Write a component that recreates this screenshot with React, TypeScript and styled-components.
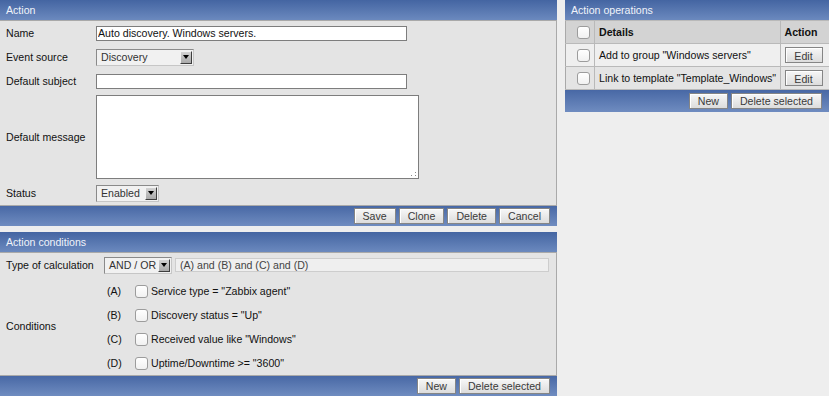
import React from "react";
import styled, { createGlobalStyle } from "styled-components";

const GlobalStyle = createGlobalStyle`
  html, body { margin: 0; padding: 0; background: #eeeeee; }
  body {
    font-family: "Liberation Sans", Arial, Helvetica, sans-serif;
    font-size: 10.6px;
    color: #111;
  }
  * { box-sizing: border-box; }
`;

const Page = styled.div`
  display: flex;
  align-items: flex-start;
  gap: 8px;
  width: 829px;
  height: 396px;
  overflow: hidden;
`;

const LeftCol = styled.div`
  display: flex;
  flex-direction: column;
  gap: 6px;
  width: 557px;
`;

const Panel = styled.section<{ $width: number }>`
  display: flex;
  flex-direction: column;
  width: ${(p) => p.$width}px;
`;

const PanelHeader = styled.div`
  height: 20px;
  line-height: 20px;
  padding-left: 6px;
  color: #f0f3fa;
  background: linear-gradient(#4465a2, #6b89be);
`;

const PanelBody = styled.div`
  background: #e4e4e4;
  border: 1px solid #a9a9a9;
  border-left: none;
`;

const PanelFooter = styled.div<{ $h?: number }>`
  height: ${(p) => p.$h ?? 20}px;
  display: flex;
  justify-content: flex-end;
  align-items: center;
  gap: 3px;
  padding-right: 7px;
  background: linear-gradient(#4868a5, #6f8cc0);
`;

const Button = styled.button<{ $w?: number }>`
  height: 16px;
  ${(p) => (p.$w ? `width: ${p.$w}px;` : "padding: 0 8px;")}
  font: inherit;
  color: #3a3a3a;
  background: linear-gradient(#f7f7f7, #dcdcdc);
  border: 1px solid #858585;
  box-shadow: inset 1px 1px 0 #ffffff;
  line-height: 14px;
  cursor: pointer;
`;

const FormRow = styled.div<{ $h?: number; $labelW?: number }>`
  display: grid;
  grid-template-columns: ${(p) => p.$labelW ?? 96}px 1fr;
  align-items: center;
  height: ${(p) => p.$h ?? 24}px;
`;

const Label = styled.div`
  padding-left: 6px;
  color: #111;
`;

const TextInput = styled.input<{ $w: number }>`
  width: ${(p) => p.$w}px;
  height: 15px;
  border: 1px solid #7d7d7d;
  background: #fff;
  font: inherit;
  color: #111;
  padding: 0 1px;
  outline: none;
`;

const TextAreaWrap = styled.div`
  position: relative;
  width: 323px;
  height: 84px;
`;

const TextArea = styled.textarea`
  width: 323px;
  height: 84px;
  border: 1px solid #7d7d7d;
  background: #fff;
  resize: none;
  font: inherit;
  outline: none;
  display: block;
`;

const Grip = styled.svg`
  position: absolute;
  right: 3px;
  bottom: 3px;
`;

const SelectBox = styled.div<{ $w: number }>`
  width: ${(p) => p.$w}px;
  height: 17px;
  display: flex;
  align-items: center;
  justify-content: space-between;
  border: 1px solid;
  border-color: #8a8a8a #c6c6c6 #c6c6c6 #8a8a8a;
  background: #f1f1f1;
  color: #333;
  padding: 0 1px 0 4px;
`;

const SelectArrow = styled.span`
  width: 12px;
  height: 13px;
  display: flex;
  align-items: center;
  justify-content: center;
  background: linear-gradient(#d2d2d2, #a9a9a9);
  border: 1px solid;
  border-color: #f2f2f2 #3e3e3e #3e3e3e #f2f2f2;
`;

const Triangle = styled.span`
  width: 0;
  height: 0;
  border-left: 3px solid transparent;
  border-right: 3px solid transparent;
  border-top: 4px solid #000;
`;

const Select = ({ w, value }: { w: number; value: string }) => (
  <SelectBox $w={w}>
    <span>{value}</span>
    <SelectArrow>
      <Triangle />
    </SelectArrow>
  </SelectBox>
);

const CalcLine = styled.div`
  display: flex;
  align-items: center;
  gap: 3px;
  padding-right: 7px;
`;

const ExprField = styled.div`
  flex: 1;
  height: 14px;
  line-height: 12px;
  background: #efefef;
  border: 1px solid #cdcdcd;
  color: #444;
  padding-left: 4px;
`;

const CondBlock = styled.div`
  display: grid;
  grid-template-columns: 104px 1fr;
  align-items: center;
`;

const CondList = styled.div`
  display: flex;
  flex-direction: column;
  padding-top: 2px;
`;

const CondRow = styled.div`
  display: flex;
  align-items: center;
  height: 24px;
`;

const CondLetter = styled.span`
  width: 31px;
  padding-left: 3px;
`;

const Checkbox = styled.span`
  display: inline-block;
  width: 13px;
  height: 13px;
  border: 1px solid #9c9c9c;
  border-radius: 3px;
  background: linear-gradient(#ffffff, #f1f1f1);
  flex-shrink: 0;
`;

const CondText = styled.span`
  margin-left: 3px;
`;

const OpsTable = styled.table`
  width: 100%;
  border-collapse: collapse;
  border-top: 1px solid #a9a9a9;
`;

const OpsRow = styled.tr<{ $bg: string }>`
  background: ${(p) => p.$bg};
`;

const Cell = styled.td<{ $w?: number; $center?: boolean }>`
  height: 23px;
  padding: 0 0 0 4px;
  border: 1px solid #b9b9b9;
  ${(p) => (p.$w ? `width: ${p.$w}px;` : "")}
  text-align: ${(p) => (p.$center ? "center" : "left")};
  white-space: nowrap;
  &:first-child { border-left-color: #a9a9a9; }
  &:last-child { border-right: none; }
`;

const HeadCell = styled(Cell).attrs({ as: "th" })`
  font-weight: bold;
  color: #111;
`;

const CheckCell = styled.div`
  display: flex;
  justify-content: center;
  padding-left: 2px;
`;

const conditions = [
  ["(A)", 'Service type = "Zabbix agent"'],
  ["(B)", 'Discovery status = "Up"'],
  ["(C)", 'Received value like "Windows"'],
  ["(D)", 'Uptime/Downtime >= "3600"'],
];

const operations = [
  ['Add to group "Windows servers"', "#efefef"],
  ['Link to template "Template_Windows"', "#e4e4e4"],
];

export default function App() {
  return (
    <>
      <GlobalStyle />
      <Page>
        <LeftCol>
          <Panel $width={557}>
            <PanelHeader>Action</PanelHeader>
            <PanelBody>
              <FormRow>
                <Label>Name</Label>
                <TextInput $w={311} defaultValue="Auto discovery. Windows servers." />
              </FormRow>
              <FormRow>
                <Label>Event source</Label>
                <Select w={98} value="Discovery" />
              </FormRow>
              <FormRow>
                <Label>Default subject</Label>
                <TextInput $w={311} defaultValue="" />
              </FormRow>
              <FormRow $h={88}>
                <Label>Default message</Label>
                <TextAreaWrap>
                  <TextArea defaultValue="" />
                  <Grip width="5" height="5" viewBox="0 0 5 5">
                    <rect x="0" y="4" width="1" height="1" fill="#8a8a8a" />
                    <rect x="4" y="1" width="1" height="1" fill="#8a8a8a" />
                    <rect x="4" y="4" width="1" height="1" fill="#8a8a8a" />
                  </Grip>
                </TextAreaWrap>
              </FormRow>
              <FormRow>
                <Label>Status</Label>
                <Select w={63} value="Enabled" />
              </FormRow>
            </PanelBody>
            <PanelFooter>
              <Button>Save</Button>
              <Button>Clone</Button>
              <Button>Delete</Button>
              <Button>Cancel</Button>
            </PanelFooter>
          </Panel>

          <Panel $width={557}>
            <PanelHeader>Action conditions</PanelHeader>
            <PanelBody>
              <FormRow $labelW={104}>
                <Label>Type of calculation</Label>
                <CalcLine>
                  <Select w={68} value="AND / OR" />
                  <ExprField>(A) and (B) and (C) and (D)</ExprField>
                </CalcLine>
              </FormRow>
              <CondBlock>
                <Label>Conditions</Label>
                <CondList>
                  {conditions.map(([letter, text]) => (
                    <CondRow key={letter}>
                      <CondLetter>{letter}</CondLetter>
                      <Checkbox />
                      <CondText>{text}</CondText>
                    </CondRow>
                  ))}
                </CondList>
              </CondBlock>
            </PanelBody>
            <PanelFooter>
              <Button>New</Button>
              <Button>Delete selected</Button>
            </PanelFooter>
          </Panel>
        </LeftCol>

        <Panel $width={264}>
          <PanelHeader>Action operations</PanelHeader>
          <OpsTable>
            <tbody>
              <OpsRow $bg="#d3d3d3">
                <HeadCell $w={29}>
                  <CheckCell>
                    <Checkbox />
                  </CheckCell>
                </HeadCell>
                <HeadCell>Details</HeadCell>
                <HeadCell $w={49}>Action</HeadCell>
              </OpsRow>
              {operations.map(([text, bg]) => (
                <OpsRow key={text} $bg={bg}>
                  <Cell $w={29}>
                    <CheckCell>
                      <Checkbox />
                    </CheckCell>
                  </Cell>
                  <Cell>{text}</Cell>
                  <Cell $w={49}>
                    <Button $w={38}>Edit</Button>
                  </Cell>
                </OpsRow>
              ))}
            </tbody>
          </OpsTable>
          <PanelFooter $h={22}>
            <Button>New</Button>
            <Button>Delete selected</Button>
          </PanelFooter>
        </Panel>
      </Page>
    </>
  );
}
